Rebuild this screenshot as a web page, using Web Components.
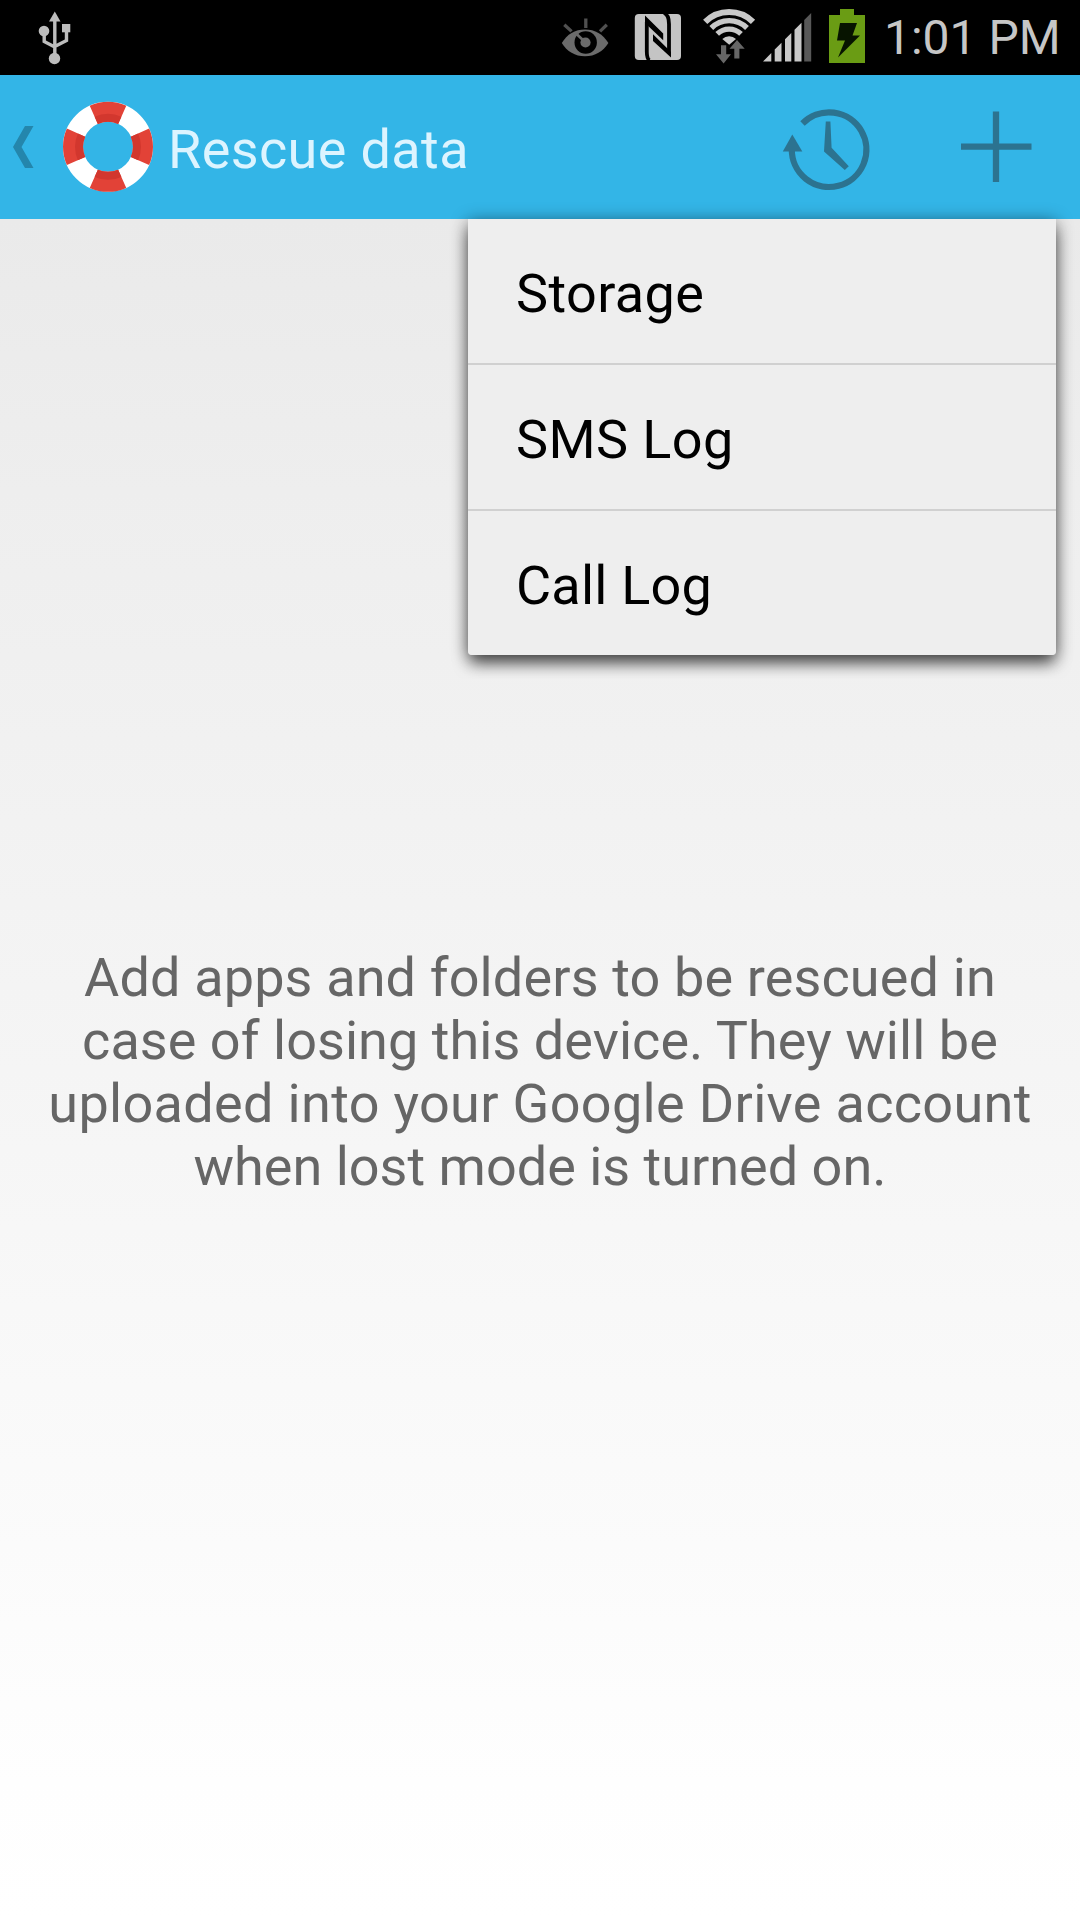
<!DOCTYPE html>
<html lang="en">
<head>
<meta charset="utf-8">
<title>Rescue data</title>
<style>
html,body{margin:0;padding:0;background:#fff}
body{width:1080px;height:1920px;overflow:hidden;font-family:Roboto,"Noto Sans",sans-serif}
</style>
</head>
<body>
<rescue-screen>
  <status-bar slot="status" time="1:01 PM"></status-bar>
  <action-bar slot="bar">Rescue data</action-bar>
  <popup-menu slot="menu">
    <menu-item>Storage</menu-item>
    <menu-item>SMS Log</menu-item>
    <menu-item style="letter-spacing:.2px">Call Log</menu-item>
  </popup-menu>
  <empty-message>
    <message-line style="letter-spacing:.14px">Add apps and folders to be rescued in</message-line>
    <message-line style="letter-spacing:.05px">case of losing this device. They will be</message-line>
    <message-line style="letter-spacing:.33px">uploaded into your Google Drive account</message-line>
    <message-line>when lost mode is turned on.</message-line>
  </empty-message>
</rescue-screen>
<script>
function define(name, html) {
  const t = document.createElement('template');
  t.innerHTML = html;
  customElements.define(name, class extends HTMLElement {
    constructor() {
      super();
      this.attachShadow({ mode: 'open' }).append(t.content.cloneNode(true));
    }
    connectedCallback() {
      const time = this.shadowRoot.querySelector('time');
      if (time) time.textContent = this.getAttribute('time');
    }
  });
}

define('rescue-screen', `
<style>
:host{display:flex;flex-direction:column;width:1080px;height:1920px;position:relative}
main{flex:1;display:flex;flex-direction:column;align-items:center;background:linear-gradient(#eaeaea,#eee 16%,#f5f5f5 50%,#fefefe 92%,#fff)}
.overlay{position:absolute;top:219px;right:24px}
</style>
<slot name="status"></slot>
<slot name="bar"></slot>
<main><slot></slot></main>
<div class="overlay"><slot name="menu"></slot></div>`);

define('status-bar', `
<style>
:host{display:flex;align-items:flex-start;height:75px;background:#000;color:#c6c6c6}
svg{display:block;flex:none}
.gap{flex:1}
time{width:196px;box-sizing:border-box;font-size:48px;line-height:56px;padding-top:10px;white-space:nowrap}
</style>
<svg width="110" height="75" viewBox="0 0 110 75" fill="#bdbdbd">
  <path d="M54.8 11.5 60.5 21.5H49z"/>
  <circle cx="44" cy="31" r="5.3"/><rect x="62" y="24" width="8.3" height="8.3"/>
  <circle cx="54.5" cy="58.5" r="5.7"/>
  <path d="M54.8 20V54M44.2 34V41.5L54.8 47M66.5 31V40.5L54.8 46.5" fill="none" stroke="#bdbdbd" stroke-width="3.4"/>
</svg>
<div class="gap"></div>
<svg width="344" height="75" viewBox="540 0 344 75">
  <g transform="translate(540 0)">
    <path d="M21.8 43C27 34 35 29.4 45 29.4S63 34 68.4 43C63 51.5 55 56.3 45 56.3S27 51.5 21.8 43z" fill="#6b6b6b"/>
    <circle cx="45.7" cy="42.5" r="11.2" fill="#000"/>
    <circle cx="45.5" cy="42.5" r="5.1" fill="#6b6b6b"/>
    <path d="M45.5 42.5 35.8 33.2" stroke="#6b6b6b" stroke-width="2.6"/>
    <path d="M45.8 18.5V28M24.3 24.8 31.6 31.4M66.8 24.8 60 31.4" stroke="#505050" stroke-width="3.3"/>
    <rect x="94.8" y="14" width="46.2" height="46" rx="4" fill="#c4c4c4"/>
    <path d="M109.5 60.5C107 59 106.8 55.5 106.8 51.5V22M129 52.5V24C129 18 128 14.5 124 13" fill="none" stroke="#000" stroke-width="3.8"/>
    <path d="M105 15.6 123.2 33.5V40.2L105 23zM113 34.2 131 52V57.6L113 41z" fill="#000"/>
    <g fill="none" stroke="#c8c8c8">
      <path d="M165.2 21.8A34 34 0 0 1 213 21.8" stroke-width="6"/>
      <path d="M171.3 28A25.3 25.3 0 0 1 207 28" stroke-width="5.4"/>
      <path d="M177.2 33.9A17 17 0 0 1 201 33.9" stroke-width="5.2"/>
    </g>
    <path d="M182.3 39A10 10 0 0 1 196 39L189.2 44.8z" fill="#c8c8c8"/>
    <path d="M197 40 204.7 48.7H199.4V58.5H194.3V48.7H189.5zM181 45.3H186.2V54.3H191L183.6 63.6 176 54.3H181z" fill="#666"/>
    <path d="M223 61.5 231.3 53V61.5zM234.7 49.6 241.5 42.8V61.5H234.7zM245 39.3 251.3 33V61.5H245zM254.5 29.8 261.5 22.8V61.5H254.5z" fill="#c8c8c8"/>
    <path d="M264.2 20 271.2 13V61.5H264.2z" fill="#585858"/>
    <path d="M300 9H314V15H325V63H289V15H300z" fill="#6a9c14"/>
    <path d="M300 23H317L312.5 35.5H320L298 57.5 305 40.5H297z" fill="#071400"/>
  </g>
</svg>
<time></time>`);

define('action-bar', `
<style>
:host{display:flex;align-items:center;height:144px;background:#33b5e7;color:#dcf4ff}
svg{display:block;flex:none}
h1{flex:1;margin:0;font-weight:400;font-size:54px;line-height:64px;letter-spacing:.38px;padding:5px 0 0;white-space:nowrap}
</style>
<svg width="168" height="144" viewBox="0 75 168 144">
  <path d="M25 126H33.5L21.5 147 33.5 168H25L13 147z" fill="#2486ac"/>
  <circle cx="108" cy="146.8" r="35" fill="none" stroke="#fff" stroke-width="20"/>
  <g fill="none" stroke="#e24237" stroke-width="20">
    <circle cx="108" cy="146.8" r="35" pathLength="360" stroke-dasharray="48 42" stroke-dashoffset="24"/>
  </g>
  <circle cx="108" cy="146.8" r="29" fill="none" stroke="#d2372e" stroke-width="8" pathLength="360" stroke-dasharray="48 42" stroke-dashoffset="24"/>
</svg>
<h1><slot></slot></h1>
<svg width="340" height="144" viewBox="740 75 340 144">
  <path d="M802.5 123.5A37.3 37.3 0 1 1 791.8 149" fill="none" stroke="#2c7390" stroke-width="6.2"/>
  <path d="M792.3 134.5 802.3 151.5H782.8z" fill="#2c7390"/>
  <path d="M825.8 121.5H830.4L831.6 147.8 848.8 166.2 844.8 170 824 151.5z" fill="#2c7390"/>
  <path d="M961 146.7H1031.5M996 111.5V182" stroke="#2c7390" stroke-width="6.3"/>
</svg>`);

define('popup-menu', `
<style>
:host{display:block;width:588px;clip-path:inset(-20px -20px -24px -20px)}
.panel{display:flex;flex-direction:column;gap:2px;background:#d0d0d0;border-radius:0 0 4px 4px;box-shadow:0 10px 16px -2px rgba(0,0,0,.6),0 2px 17px rgba(0,0,0,.42)}
</style>
<div class="panel"><slot></slot></div>`);

define('menu-item', `
<style>
:host{display:flex;align-items:center;box-sizing:border-box;height:144px;padding:5px 48px 0;background:#eee;color:#000;font-size:54px;line-height:64px;letter-spacing:.4px}
:host(:last-child){border-radius:0 0 4px 4px}
</style>
<slot></slot>`);

define('empty-message', `
<style>
:host{display:flex;flex-direction:column;align-items:center;margin-top:727px;color:#666;font-size:54px;line-height:63px}
</style>
<slot></slot>`);

define('message-line', `
<style>
:host{display:block;white-space:nowrap}
</style>
<slot></slot>`);
</script>
</body>
</html>
